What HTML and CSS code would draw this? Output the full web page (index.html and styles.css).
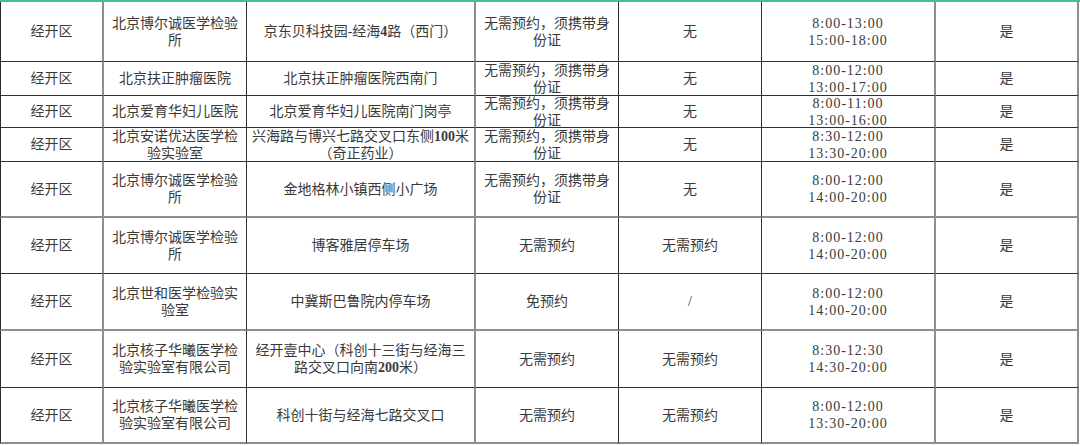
FILE: index.html
```html
<!DOCTYPE html>
<html lang="zh-CN">
<head>
<meta charset="utf-8">
<title>核酸检测点</title>
<link rel="stylesheet" href="styles.css">
</head>
<body>
<div class="sheet">
  <div class="grid">
    <!-- row 1 -->
    <div class="c c1 r-dark"><p class="tx">经开区</p></div>
    <div class="c c2 r-dark"><p class="tx">北京博尔诚医学检验所</p></div>
    <div class="c c3 r-dark"><p class="tx">京东贝科技园-经海<span class="num">4</span>路（西门）</p></div>
    <div class="c c4 r-dark"><p class="tx">无需预约，须携带身份证</p></div>
    <div class="c c5 r-dark"><p class="tx">无</p></div>
    <div class="c c6 r-dark"><p class="tx t">8:00-13:00<br>15:00-18:00</p></div>
    <div class="c c7 r-dark"><p class="tx">是</p></div>
    <!-- row 2 -->
    <div class="c c1 r-dark"><p class="tx">经开区</p></div>
    <div class="c c2 r-dark"><p class="tx">北京扶正肿瘤医院</p></div>
    <div class="c c3 r-dark"><p class="tx">北京扶正肿瘤医院西南门</p></div>
    <div class="c c4 r-dark"><p class="tx">无需预约，须携带身份证</p></div>
    <div class="c c5 r-dark"><p class="tx">无</p></div>
    <div class="c c6 r-dark"><p class="tx t">8:00-12:00<br>13:00-17:00</p></div>
    <div class="c c7 r-dark"><p class="tx">是</p></div>
    <!-- row 3 -->
    <div class="c c1 r-dark"><p class="tx">经开区</p></div>
    <div class="c c2 r-dark"><p class="tx">北京爱育华妇儿医院</p></div>
    <div class="c c3 r-dark"><p class="tx">北京爱育华妇儿医院南门岗亭</p></div>
    <div class="c c4 r-dark"><p class="tx">无需预约，须携带身份证</p></div>
    <div class="c c5 r-dark"><p class="tx">无</p></div>
    <div class="c c6 r-dark"><p class="tx t">8:00-11:00<br>13:00-16:00</p></div>
    <div class="c c7 r-dark"><p class="tx">是</p></div>
    <!-- row 4 -->
    <div class="c c1 r-dark"><p class="tx">经开区</p></div>
    <div class="c c2 r-dark"><p class="tx">北京安诺优达医学检验实验室</p></div>
    <div class="c c3 r-dark"><p class="tx">兴海路与博兴七路交叉口东侧<span class="num">100</span>米<br>（奇正药业）</p></div>
    <div class="c c4 r-dark"><p class="tx">无需预约，须携带身份证</p></div>
    <div class="c c5 r-dark"><p class="tx">无</p></div>
    <div class="c c6 r-dark"><p class="tx t">8:30-12:00<br>13:30-20:00</p></div>
    <div class="c c7 r-dark"><p class="tx">是</p></div>
    <!-- row 5 -->
    <div class="c c1 r-gray"><p class="tx">经开区</p></div>
    <div class="c c2 r-gray"><p class="tx">北京博尔诚医学检验所</p></div>
    <div class="c c3 r-gray"><p class="tx">金地格林小镇西侧小广场</p></div>
    <div class="c c4 r-gray"><p class="tx">无需预约，须携带身份证</p></div>
    <div class="c c5 r-gray"><p class="tx">无</p></div>
    <div class="c c6 r-gray"><p class="tx t">8:00-12:00<br>14:00-20:00</p></div>
    <div class="c c7 r-gray"><p class="tx">是</p></div>
    <!-- row 6 -->
    <div class="c c1 r-dark"><p class="tx">经开区</p></div>
    <div class="c c2 r-dark"><p class="tx">北京博尔诚医学检验所</p></div>
    <div class="c c3 r-dark"><p class="tx">博客雅居停车场</p></div>
    <div class="c c4 r-dark"><p class="tx">无需预约</p></div>
    <div class="c c5 r-dark"><p class="tx">无需预约</p></div>
    <div class="c c6 r-dark"><p class="tx t">8:00-12:00<br>14:00-20:00</p></div>
    <div class="c c7 r-dark"><p class="tx">是</p></div>
    <!-- row 7 -->
    <div class="c c1 r-gray"><p class="tx">经开区</p></div>
    <div class="c c2 r-gray"><p class="tx">北京世和医学检验实验室</p></div>
    <div class="c c3 r-gray"><p class="tx">中冀斯巴鲁院内停车场</p></div>
    <div class="c c4 r-gray"><p class="tx">免预约</p></div>
    <div class="c c5 r-gray"><p class="tx">/</p></div>
    <div class="c c6 r-gray"><p class="tx t">8:00-12:00<br>14:00-20:00</p></div>
    <div class="c c7 r-gray"><p class="tx">是</p></div>
    <!-- row 8 -->
    <div class="c c1 r-dark"><p class="tx">经开区</p></div>
    <div class="c c2 r-dark"><p class="tx">北京核子华曦医学检验实验室有限公司</p></div>
    <div class="c c3 r-dark"><p class="tx">经开壹中心（科创十三街与经海三<br>路交叉口向南<span class="num">200</span>米）</p></div>
    <div class="c c4 r-dark"><p class="tx">无需预约</p></div>
    <div class="c c5 r-dark"><p class="tx">无需预约</p></div>
    <div class="c c6 r-dark"><p class="tx t">8:30-12:30<br>14:30-20:00</p></div>
    <div class="c c7 r-dark"><p class="tx">是</p></div>
    <!-- row 9 -->
    <div class="c c1 r-gray"><p class="tx">经开区</p></div>
    <div class="c c2 r-gray"><p class="tx">北京核子华曦医学检验实验室有限公司</p></div>
    <div class="c c3 r-gray"><p class="tx">科创十街与经海七路交叉口</p></div>
    <div class="c c4 r-gray"><p class="tx">无需预约</p></div>
    <div class="c c5 r-gray"><p class="tx">无需预约</p></div>
    <div class="c c6 r-gray"><p class="tx t">8:00-12:00<br>13:30-20:00</p></div>
    <div class="c c7 r-gray"><p class="tx">是</p></div>
  </div>
</div>
</body>
</html>
```

FILE: styles.css
```css
html, body {
  margin: 0;
  padding: 0;
  background: #ffffff;
}

body {
  width: 1080px;
  height: 446px;
  overflow: hidden;
  font-family: "Liberation Serif", "Noto Sans CJK SC", serif;
  font-size: 14px;
  line-height: 17px;
  color: #3a3a3a;
}

.sheet {
  border-top: 2px solid #3fc28f;
  width: 1080px;
}

.grid {
  display: grid;
  grid-template-columns: 104px 143px 229px 143px 143px 174px 143px;
  grid-template-rows: 60px 34px 32px 34px 56px 56px 57px 57px 56px;
  width: 1079px;
}

.c {
  box-sizing: border-box;
  display: flex;
  align-items: center;
  justify-content: center;
  padding: 0 4px;
  overflow: hidden;
  border-right: 1px solid #2e2e2e;
}

.tx {
  margin: 0;
  text-align: center;
  white-space: normal;
}

.c1 {
  border-left: 1px solid #2e2e2e;
  border-right: 2px solid #8e8e8e;
}

.c3,
.c6,
.c7 {
  border-right: 2px solid #8e8e8e;
}

.r-dark {
  border-bottom: 1px solid #2e2e2e;
}

.r-gray {
  border-bottom: 2px solid #8e8e8e;
}

.t {
  letter-spacing: 1px;
}

.num {
  font-weight: bold;
}
```
